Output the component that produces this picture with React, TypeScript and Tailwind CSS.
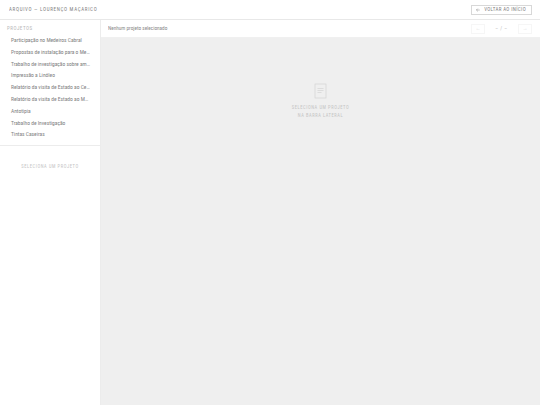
import React from "react";

const projects = [
  "Participação no Medeiros Cabral",
  "Propostas de instalação para o Medeiros",
  "Trabalho de investigação sobre amianto",
  "Impressão a Linóleo",
  "Relatório da visita de Estado ao Centro",
  "Relatório da visita de Estado ao Museu",
  "Antotipia",
  "Trabalho de Investigação",
  "Tintas Caseiras",
];

const App: React.FC = () => {
  return (
    <div className="w-[540px] h-[405px] flex flex-col bg-white overflow-hidden font-[Roboto] [font-stretch:75%]">
      <header className="h-5 shrink-0 flex items-center justify-between pl-[9px] pr-2 border-b border-[#e8e8e8]">
        <div className="text-[5px] leading-none tracking-[0.14em] text-[#808080] opacity-[0.99]">ARQUIVO — LOURENÇO MAÇARICO</div>
        <button className="h-[10px] w-[61px] flex items-center justify-end pr-[5px] gap-[4px] border border-[#d8d8d8] text-[5px] leading-none tracking-[0.07em] text-[#808080] whitespace-nowrap">
          <svg width="4" height="4" viewBox="0 0 8 8" fill="none" stroke="#888" strokeWidth="1">
            <path d="M7.5 4H.8M3.6 1.2L.8 4l2.8 2.8" />
          </svg>
          <span className="opacity-[0.99]">VOLTAR AO INÍCIO</span>
        </button>
      </header>
      <div className="flex-1 flex min-h-0">
        <aside className="w-[101px] shrink-0 border-r border-[#ececec] flex flex-col">
          <div className="border-b border-[#ececec] pb-[4px] opacity-[0.99]">
            <div className="pl-[7px] pt-[5px] pb-[2px] text-[5px] leading-[6px] tracking-[0.1em] text-[#b8b8b8]">PROJETOS</div>
            <ul className="mt-[2px]">
              {projects.map(p => (
                <li key={p} className="h-[11.8px] pl-[11px] pr-[10px] text-[5.5px] leading-[11.8px] text-[#808080] truncate">
                  {p}
                </li>
              ))}
            </ul>
          </div>
          <div className="pt-[18px] text-center text-[4.5px] leading-[6px] tracking-[0.13em] text-[#c4c4c4] opacity-[0.99]">SELECIONA UM PROJETO</div>
        </aside>
        <main className="flex-1 flex flex-col min-w-0 bg-[#efefef]">
          <div className="h-[18px] shrink-0 flex items-center justify-between pl-[7px] pr-[8px] bg-white border-b border-[#f0f0f0]">
            <div className="text-[5.25px] leading-none text-[#8a8a8a] opacity-[0.99]">Nenhum projeto selecionado</div>
            <div className="flex items-center opacity-[0.99]">
              <button className="w-[14px] h-[10px] border border-[#f6f6f6] text-[5px] leading-none text-[#ddd]">←</button>
              <div className="w-[33px] text-center text-[5px] leading-none tracking-[0.1em] text-[#b8b8b8]">– / –</div>
              <button className="w-[14px] h-[10px] border border-[#f6f6f6] text-[5px] leading-none text-[#ddd]">→</button>
            </div>
          </div>
          <div className="flex-1 flex flex-col items-center pt-[45px]">
            <svg width="13" height="16" viewBox="0 0 13 16" fill="none" stroke="#d4d4d4" strokeWidth="0.7">
              <rect x="1" y="1" width="11" height="14" />
              <path d="M3.5 5.5h6M3.5 7.5h6M3.5 9.5h4" />
            </svg>
            <div className="mt-[5px] text-center text-[4.5px] leading-[8px] tracking-[0.13em] text-[#c4c4c4] opacity-[0.99]">
              <div>SELECIONA UM PROJETO</div>
              <div>NA BARRA LATERAL</div>
            </div>
          </div>
        </main>
      </div>
    </div>
  );
};

export default App;
